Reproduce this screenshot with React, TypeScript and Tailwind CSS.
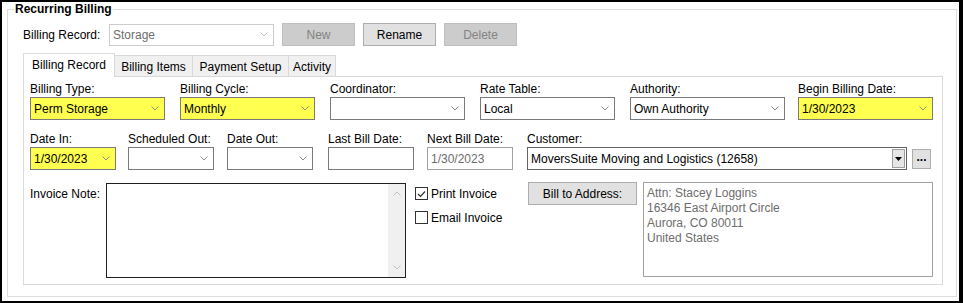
import React from "react";

const Chevron = ({ up = false, color = "#8a8a8a" }: { up?: boolean; color?: string }) => (
  <svg width="8" height="5" viewBox="0 0 8 5" className="shrink-0">
    <path
      d={up ? "M0.5 4.5 L4 1 L7.5 4.5" : "M0.5 0.5 L4 4 L7.5 0.5"}
      fill="none"
      stroke={color}
      strokeWidth="1"
    />
  </svg>
);

const Combo = ({
  value = "",
  className = "",
  yellow = false,
}: {
  value?: string;
  className?: string;
  yellow?: boolean;
}) => (
  <div
    className={`flex h-[23px] items-center justify-between border border-[#7a7a7a] pl-[3px] pr-[5px] ${
      yellow ? "bg-[#ffff4f]" : "bg-white"
    } ${className}`}
  >
    <span className="leading-[14px]">{value}</span>
    <Chevron />
  </div>
);

const Field = ({
  label,
  children,
  className = "",
}: {
  label: string;
  children: React.ReactNode;
  className?: string;
}) => (
  <div className={`flex flex-col ${className}`}>
    <div className="mb-px h-[14px] leading-[14px]">{label}</div>
    {children}
  </div>
);

const TextBox = ({
  value = "",
  disabled = false,
}: {
  value?: string;
  disabled?: boolean;
}) => (
  <div
    className={`flex h-[23px] w-[86px] items-center border pl-[3px] ${
      disabled ? "border-[#a0a0a0] text-[#6d6d6d]" : "border-[#7a7a7a]"
    }`}
  >
    {value}
  </div>
);

const CheckBox = ({ checked = false, label }: { checked?: boolean; label: string }) => (
  <div className="flex h-[13px] items-center">
    <div className="flex h-[13px] w-[13px] items-center justify-center border border-[#333333] bg-white">
      {checked && (
        <svg width="9" height="8" viewBox="0 0 9 8">
          <path d="M1 4 L3.5 6.5 L8 1.5" fill="none" stroke="#333333" strokeWidth="1.2" />
        </svg>
      )}
    </div>
    <span className="ml-[3px] leading-[14px]">{label}</span>
  </div>
);

const tabs = ["Billing Items", "Payment Setup", "Activity"];
const tabWidths: Record<string, string> = {
  "Billing Items": "w-[78px]",
  "Payment Setup": "w-[96px]",
  Activity: "w-[47px]",
};

export default function App() {
  return (
    <div className="h-[303px] w-[963px] border-b-2 border-l-2 border-r-4 border-t-2 border-black bg-white font-['Liberation_Sans',Arial,sans-serif] text-[12px] text-black">
      <fieldset className="ml-[5px] h-[295px] w-[950px] border border-[#dcdcdc] p-0">
        <legend className="ml-[6px] px-px text-[12px] font-bold leading-[14px]">
          Recurring Billing
        </legend>

        <div className="pl-[15px] pt-[7px]">
          {/* record row */}
          <div className="flex items-center">
            <span className="w-[86px] leading-[14px]">Billing Record:</span>
            <div className="flex h-[22px] w-[165px] items-center justify-between border border-[#cccccc] pl-[3px] pr-[5px] text-[#6d6d6d]">
              <span>Storage</span>
              <Chevron color="#c4c4c4" />
            </div>
            <button className="ml-[8px] h-[23px] w-[73px] border border-[#bfbfbf] bg-[#cccccc] text-[#838383]">
              New
            </button>
            <button className="ml-[8px] h-[23px] w-[73px] border border-[#adadad] bg-[#e1e1e1]">
              Rename
            </button>
            <button className="ml-[8px] h-[23px] w-[73px] border border-[#bfbfbf] bg-[#cccccc] text-[#838383]">
              Delete
            </button>
          </div>

          {/* tabs */}
          <div className="mt-[7px] flex items-end">
            <div className="relative z-10 -mb-px flex h-[24px] w-[92px] justify-center border-x border-t border-[#d9d9d9] bg-white pt-[4px] leading-[14px]">
              Billing Record
            </div>
            {tabs.map((t) => (
              <div
                key={t}
                className={`flex h-[21px] items-start justify-center border-r border-t border-[#d9d9d9] bg-[#f0f0f0] pt-[4px] leading-[14px] ${tabWidths[t]}`}
              >
                {t}
              </div>
            ))}
          </div>

          {/* panel */}
          <div className="h-[209px] w-[920px] border border-[#d9d9d9] pl-[6px] pt-[5px]">
            <div className="flex">
              <Field label="Billing Type:">
                <Combo value="Perm Storage" yellow className="w-[135px]" />
              </Field>
              <Field label="Billing Cycle:" className="ml-[15px]">
                <Combo value="Monthly" yellow className="w-[135px]" />
              </Field>
              <Field label="Coordinator:" className="ml-[15px]">
                <Combo className="w-[135px]" />
              </Field>
              <Field label="Rate Table:" className="ml-[15px]">
                <Combo value="Local" className="w-[135px]" />
              </Field>
              <Field label="Authority:" className="ml-[15px]">
                <Combo value="Own Authority" className="w-[155px]" />
              </Field>
              <Field label="Begin Billing Date:" className="ml-[13px]">
                <Combo value="1/30/2023" yellow className="w-[135px]" />
              </Field>
            </div>

            <div className="mt-[12px] flex">
              <Field label="Date In:">
                <Combo value="1/30/2023" yellow className="w-[86px]" />
              </Field>
              <Field label="Scheduled Out:" className="ml-[12px]">
                <Combo className="w-[86px]" />
              </Field>
              <Field label="Date Out:" className="ml-[13px]">
                <Combo className="w-[86px]" />
              </Field>
              <Field label="Last Bill Date:" className="ml-[15px]">
                <TextBox />
              </Field>
              <Field label="Next Bill Date:" className="ml-[13px]">
                <TextBox value="1/30/2023" disabled />
              </Field>
              <Field label="Customer:" className="ml-[14px]">
                <div className="flex items-center">
                  <div className="flex h-[23px] w-[380px] items-center justify-between border border-[#646464] pl-[3px] pr-px">
                    <span>MoversSuite Moving and Logistics (12658)</span>
                    <div className="flex h-[19px] w-[13px] items-center justify-center border border-[#a0a0a0] bg-[#e6e6e6]">
                      <svg width="7" height="4" viewBox="0 0 7 4">
                        <path d="M0 0 H7 L3.5 4 Z" fill="#000000" />
                      </svg>
                    </div>
                  </div>
                  <button className="ml-[5px] flex h-[20px] w-[19px] items-center justify-center border border-[#adadad] bg-[#e1e1e1] pb-[4px] font-bold leading-none">
                    ...
                  </button>
                </div>
              </Field>
            </div>

            <div className="mt-[13px] flex items-start">
              <span className="w-[76px] pt-[4px] leading-[14px]">Invoice Note:</span>
              <div className="flex h-[95px] w-[300px] justify-end border border-[#1f1f1f] bg-white">
                <div className="flex h-full w-[17px] flex-col items-center justify-between bg-[#f0f0f0] py-[7px]">
                  <Chevron up color="#c0c0c0" />
                  <Chevron color="#c0c0c0" />
                </div>
              </div>
              <div className="ml-[9px] flex w-[113px] flex-col gap-[11px] pt-[4px]">
                <CheckBox checked label="Print Invoice" />
                <CheckBox label="Email Invoice" />
              </div>
              <button className="-mt-px h-[23px] w-[109px] border border-[#adadad] bg-[#e1e1e1]">
                Bill to Address:
              </button>
              <div className="-mt-px ml-[6px] h-[95px] w-[290px] border border-[#a0a0a0] pl-[3px] pt-[3px] leading-[15px] text-[#6d6d6d]">
                <div>Attn: Stacey Loggins</div>
                <div>16346 East Airport Circle</div>
                <div>Aurora, CO 80011</div>
                <div>United States</div>
              </div>
            </div>
          </div>
        </div>
      </fieldset>
    </div>
  );
}
